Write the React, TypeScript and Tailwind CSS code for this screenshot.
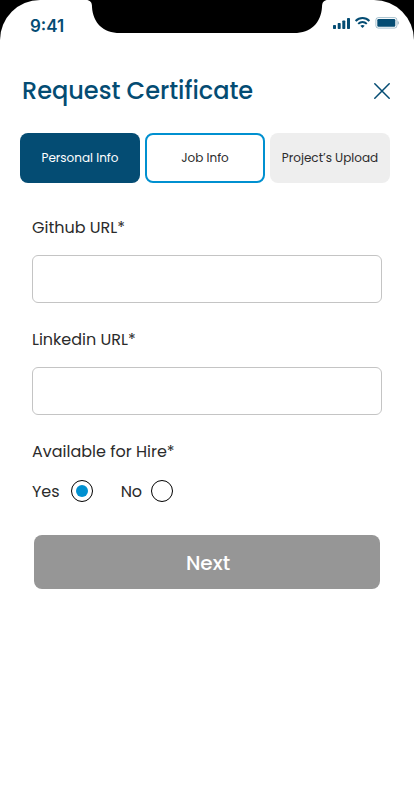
import { useState } from "react";

function StatusBar() {
  return (
    <header className="relative flex h-12 items-center justify-between pl-[30px] pr-[15px] text-[#044c73]">
      <svg
        className="absolute left-1/2 top-0 -translate-x-1/2"
        width="242"
        height="33"
        viewBox="0 0 242 33"
        fill="#000"
        aria-hidden="true"
      >
        <path d="M0 0 C4 0 6 2 6 7 C7 23 17 33 34 33 H208 C225 33 235 23 236 7 C236 2 238 0 242 0 Z" />
      </svg>
      <time className="pt-1 font-['Inter',sans-serif] text-[17px] leading-6 font-semibold">9:41</time>
      <svg width="66" height="12" viewBox="0 0 66 12" fill="currentColor" className="mb-0.5" aria-hidden="true">
        <rect x="0" y="8" width="3" height="4" rx="0.7" />
        <rect x="4.7" y="6" width="3" height="6" rx="0.7" />
        <rect x="9.3" y="3.5" width="3" height="8.5" rx="0.7" />
        <rect x="14" y="1" width="3" height="11" rx="0.7" />
        <g fill="none" stroke="currentColor" strokeWidth="2">
          <path d="M22.6 4 C26.6 0 32.4 0 36.4 4" />
          <path d="M25.2 6.9 C27.7 4.5 31.3 4.5 33.8 6.9" />
        </g>
        <path d="M27.3 8.7 C28.6 7.6 30.4 7.6 31.7 8.7 L29.5 10.9 Z" />
        <rect x="42.9" y="0.6" width="21" height="10.5" rx="2.4" fill="none" stroke="currentColor" strokeOpacity="0.35" />
        <rect x="44.3" y="2" width="18" height="7.7" rx="1.2" />
        <path d="M64.7 4.1 C66.3 4.8 66.3 7 64.7 7.7 Z" opacity="0.4" />
      </svg>
    </header>
  );
}

function UrlField({ id, label }: { id: string; label: string }) {
  return (
    <div className="flex flex-col gap-[15px]">
      <label htmlFor={id}>{label}</label>
      <input
        id={id}
        type="url"
        required
        className="h-12 w-full rounded-md border border-[#c4c4c4] bg-white px-3 outline-none focus:border-[#0090d0]"
      />
    </div>
  );
}

function HireOption({
  label,
  gap,
  checked,
  onSelect,
}: {
  label: string;
  gap: string;
  checked: boolean;
  onSelect: () => void;
}) {
  return (
    <label className={`flex items-start ${gap}`}>
      {label}
      <span className="grid size-[22px] place-items-center">
        <input
          type="radio"
          name="hire"
          checked={checked}
          onChange={onSelect}
          className="peer col-start-1 row-start-1 size-[22px] appearance-none rounded-full border border-black"
        />
        <span className="pointer-events-none col-start-1 row-start-1 hidden size-3 rounded-full bg-[#0090d0] peer-checked:block" />
      </span>
    </label>
  );
}

export default function App() {
  const [hire, setHire] = useState("yes");

  return (
    <div className="min-h-screen bg-black font-['Poppins','Inter',sans-serif] text-[#2b2b2b]">
      <div className="min-h-screen rounded-t-[40px] bg-white pb-8">
        <StatusBar />
        <main>
          <div className="flex items-center justify-between pl-[22px] pr-6 pt-[25px]">
            <h1 className="text-2xl leading-9 font-medium text-[#044c73]">Request Certificate</h1>
            <button type="button" aria-label="Close" className="text-[#044c73]">
              <svg width="16" height="16" viewBox="0 0 16 16" fill="none" stroke="currentColor" strokeWidth="1.5" strokeLinecap="round">
                <path d="M0.8 0.8 L15.2 15.2 M15.2 0.8 L0.8 15.2" />
              </svg>
            </button>
          </div>

          <nav className="mt-6 grid grid-cols-3 gap-[5px] pl-5 pr-6 text-xs">
            <button type="button" className="h-[50px] rounded-lg bg-[#044c73] whitespace-nowrap text-white">
              Personal Info
            </button>
            <button type="button" aria-current="step" className="h-[50px] rounded-lg border-2 border-[#0090d0] whitespace-nowrap">
              Job Info
            </button>
            <button type="button" className="h-[50px] rounded-lg bg-[#eeeeee] whitespace-nowrap">
              Project’s Upload
            </button>
          </nav>

          <form className="px-8 pt-[33px]" onSubmit={(event) => event.preventDefault()}>
            <div className="flex flex-col gap-[25px]">
              <UrlField id="github" label="Github URL*" />
              <UrlField id="linkedin" label="Linkedin URL*" />
              <fieldset>
                <legend>Available for Hire*</legend>
                <div className="flex gap-7 pt-4">
                  <HireOption label="Yes" gap="gap-[11px]" checked={hire === "yes"} onSelect={() => setHire("yes")} />
                  <HireOption label="No" gap="gap-[9px]" checked={hire === "no"} onSelect={() => setHire("no")} />
                </div>
              </fieldset>
            </div>
            <div className="px-0.5 pt-[31px]">
              <button type="submit" className="h-[54px] w-full rounded-lg bg-[#969696] pt-0.5 pl-0.5 text-xl font-medium text-white">
                Next
              </button>
            </div>
          </form>
        </main>
      </div>
    </div>
  );
}
